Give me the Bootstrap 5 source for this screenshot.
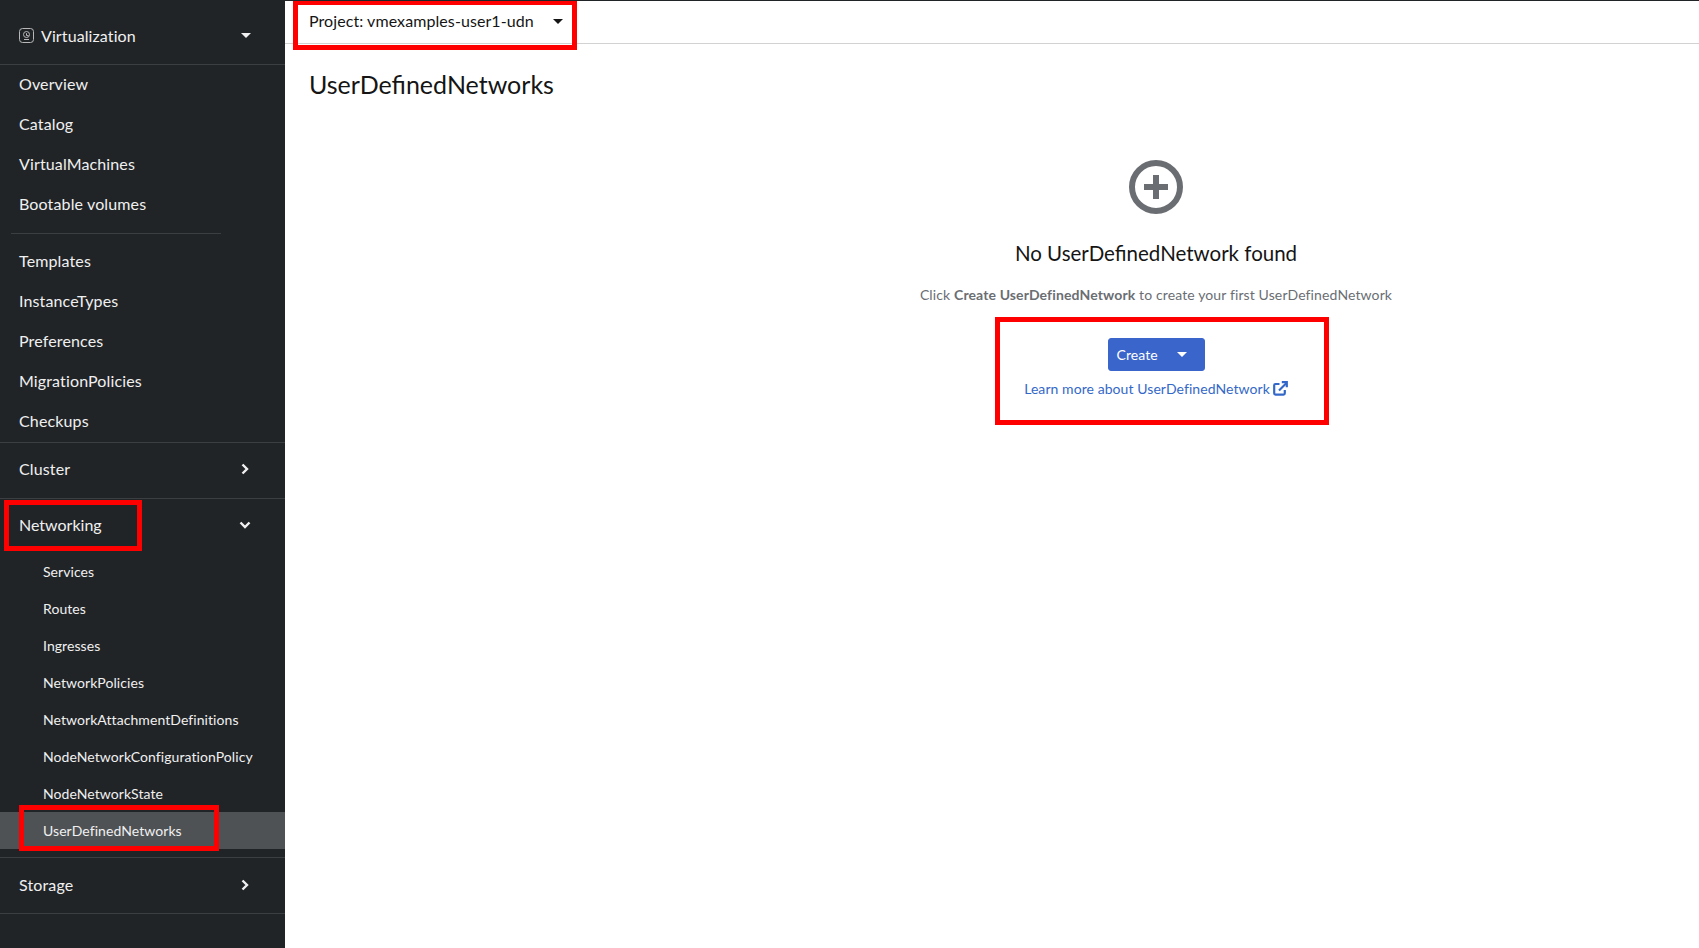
<!DOCTYPE html>
<html lang="en">
<head>
<meta charset="utf-8">
<title>UserDefinedNetworks</title>
<link rel="stylesheet" href="https://cdn.jsdelivr.net/npm/bootstrap@5.3.0/dist/css/bootstrap.min.css">
<style>
html,body{height:100%;overflow:hidden}
body{font-family:"Lato","Liberation Sans",sans-serif;background:#fff;color:#151515;border-top:1px solid #212427}
.shell{height:947px;position:relative}
.side{width:285px;background:#212427;color:#f0f0f0;flex:none}
.persp{height:64px;border-bottom:1px solid #3c3f42;padding:6px 34px 0 19px;font-size:16px;letter-spacing:.1px}
.persp-ico{width:15px;height:15px;margin-right:7px}
.tri{width:0;height:0;border-left:5px solid transparent;border-right:5px solid transparent;border-top:5px solid currentColor}
.itm{color:#f0f0f0;padding:0 19px;height:40px;line-height:38px;font-size:16px;letter-spacing:.13px;display:block;text-decoration:none}
.sepr{margin:8px 0 8px 11px;width:210px;height:1px;background:#3c3f42}
.grp{border-top:1px solid #3c3f42}
.grp-h{height:55px;padding:0 35px 4px 19px;font-size:16px;letter-spacing:.13px;color:#f0f0f0}
.grp-h.open{height:54px;padding-bottom:2px;padding-right:34px;letter-spacing:0}
.grp-h.last{padding-bottom:2px}
.sub{display:block;height:37px;line-height:37px;padding-left:43px;font-size:14px;letter-spacing:.07px;color:#f0f0f0;text-decoration:none}
.sub.cur{background:#4f5255}
.subs{padding-bottom:8px}
.tb{height:43px;border-bottom:1px solid #d2d2d2;padding:0 0 2px 24px;font-size:16px;letter-spacing:.08px}
.tb-btn{width:266px;height:40px;color:#151515}
.tb .tri{border-left-width:5.5px;border-right-width:5.5px;border-top-width:5.5px;margin-right:12px}
.ttl{font-size:25px;font-weight:400;margin:0;padding:23px 24px 0;line-height:34px;color:#151515}
.empty{margin-top:59px;padding-left:328px}
.plus{width:54px;height:54px;display:block}
.emp-h{font-size:20.5px;font-weight:400;line-height:28px;margin:25px 0 0;color:#151515}
.emp-t{font-size:14px;letter-spacing:.12px;line-height:20px;color:#6a6e73;margin:18px 0 0}
.emp-t strong{font-weight:700}
.btn-create{--bs-btn-bg:#3a66cc;--bs-btn-border-color:#3a66cc;--bs-btn-color:#fff;--bs-btn-hover-bg:#3a66cc;--bs-btn-hover-color:#fff;--bs-btn-border-radius:3px;width:97px;height:33px;margin-top:33px;padding:0 8px 1px;font-size:14px;letter-spacing:.1px;gap:19px}
.lnk{font-size:14px;letter-spacing:.07px;line-height:20px;color:#3468c8;text-decoration:none;margin-top:8px}
.ext{width:15px;height:15px;margin-left:3px;vertical-align:-2px}
.redbox{position:absolute;border:5px solid #f00;pointer-events:none}
</style>
</head>
<body>
<div class="shell d-flex">
  <aside class="side d-flex flex-column">
    <div class="persp d-flex align-items-center">
      <svg class="persp-ico" viewBox="0 0 15 15" fill="none" stroke="#b8b8b8"><rect x=".5" y=".5" width="14" height="14" rx="3"/><circle cx="7.500" cy="6.500" r="3"/><path d="M7.500 5.200v2.400h2M5 11.500h5"/></svg>
      <span>Virtualization</span>
      <span class="tri ms-auto"></span>
    </div>
    <nav class="d-flex flex-column">
      <a class="itm" href="#">Overview</a>
      <a class="itm" href="#">Catalog</a>
      <a class="itm" href="#">VirtualMachines</a>
      <a class="itm" href="#">Bootable volumes</a>
      <div class="sepr"></div>
      <a class="itm" href="#">Templates</a>
      <a class="itm" href="#">InstanceTypes</a>
      <a class="itm" href="#">Preferences</a>
      <a class="itm" href="#">MigrationPolicies</a>
      <a class="itm" href="#">Checkups</a>
    </nav>
    <div class="grp">
      <div class="grp-h d-flex align-items-center justify-content-between"><span>Cluster</span>
        <svg width="10" height="12" viewBox="0 0 10 12" fill="none" stroke="#f0f0f0" stroke-width="2.4"><path d="M2.500 1.500 7 6l-4.500 4.500"/></svg></div>
    </div>
    <div class="grp">
      <div class="grp-h open d-flex align-items-center justify-content-between"><span>Networking</span>
        <svg width="12" height="10" viewBox="0 0 12 10" fill="none" stroke="#f0f0f0" stroke-width="2.400"><path d="M1.500 2.500 6 7l4.500-4.500"/></svg></div>
      <div class="subs">
        <a class="sub" href="#">Services</a>
        <a class="sub" href="#">Routes</a>
        <a class="sub" href="#">Ingresses</a>
        <a class="sub" href="#">NetworkPolicies</a>
        <a class="sub" href="#">NetworkAttachmentDefinitions</a>
        <a class="sub" href="#">NodeNetworkConfigurationPolicy</a>
        <a class="sub" href="#">NodeNetworkState</a>
        <a class="sub cur" href="#">UserDefinedNetworks</a>
      </div>
    </div>
    <div class="grp">
      <div class="grp-h last d-flex align-items-center justify-content-between"><span>Storage</span>
        <svg width="10" height="12" viewBox="0 0 10 12" fill="none" stroke="#f0f0f0" stroke-width="2.4"><path d="M2.500 1.500 7 6l-4.500 4.500"/></svg></div>
    </div>
    <div class="grp"></div>
  </aside>
  <main class="flex-grow-1 d-flex flex-column">
    <div class="tb d-flex align-items-center">
      <div class="tb-btn d-flex align-items-center justify-content-between"><span>Project: vmexamples-user1-udn</span><span class="tri"></span></div>
    </div>
    <h1 class="ttl">UserDefinedNetworks</h1>
    <section class="empty d-flex flex-column align-items-center">
      <svg class="plus" viewBox="0 0 54 54"><circle cx="27" cy="27" r="24" fill="none" stroke="#6a6e73" stroke-width="6"/><path d="M24 15h6v9h9v6h-9v9h-6v-9h-9v-6h9z" fill="#6a6e73"/></svg>
      <h2 class="emp-h">No UserDefinedNetwork found</h2>
      <p class="emp-t">Click <strong>Create UserDefinedNetwork</strong> to create your first UserDefinedNetwork</p>
      <button type="button" class="btn btn-create d-flex align-items-center"><span>Create</span><span class="tri"></span></button>
      <a class="lnk" href="#">Learn more about UserDefinedNetwork<svg class="ext" viewBox="0 0 15 15" fill="none" stroke="currentColor" stroke-width="2.200"><path d="M6.500 3H2.500a1.300 1.300 0 0 0-1.300 1.300v8a1.300 1.300 0 0 0 1.300 1.300h8a1.300 1.300 0 0 0 1.300-1.300V9"/><path d="M6 9.500 13.500 2"/><path d="M8.800 1.200h5v5"/></svg></a>
    </section>
  </main>
  <div class="redbox" style="left:293px;top:-1px;width:284px;height:50px"></div>
  <div class="redbox" style="left:995px;top:316px;width:334px;height:108px"></div>
  <div class="redbox" style="left:4px;top:499px;width:138px;height:51px"></div>
  <div class="redbox" style="left:19px;top:804px;width:200px;height:46px"></div>
</div>
<script src="https://cdn.jsdelivr.net/npm/bootstrap@5.3.0/dist/js/bootstrap.bundle.min.js"></script>
</body>
</html>
